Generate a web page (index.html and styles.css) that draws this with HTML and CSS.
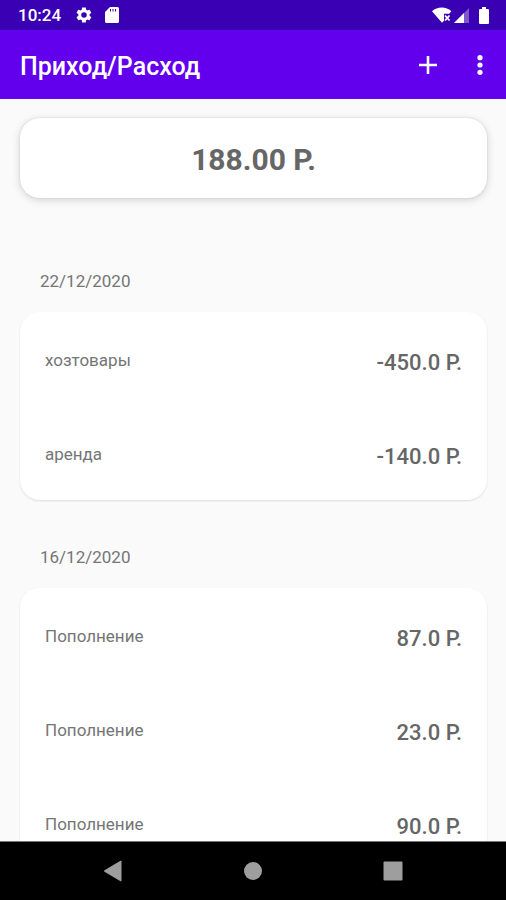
FILE: index.html
```html
<!DOCTYPE html>
<html lang="ru">
<head>
<meta charset="utf-8">
<meta name="viewport" content="width=device-width, initial-scale=1">
<title>Приход/Расход</title>
<link rel="stylesheet" href="styles.css">
</head>
<body>
<div class="status">
  <div class="status-left">
    <span class="clock">10:24</span>
    <svg class="gear" width="18" height="18" viewBox="0 0 24 24"><path d="M19.4 13c0-.3.1-.6.1-1s0-.7-.1-1l2.1-1.6c.2-.2.3-.4.1-.7l-2-3.400c-.1-.3-.4-.3-.6-.3l-2.500 1c-.5-.4-1.100-.7-1.700-1l-.4-2.600c0-.2-.2-.4-.5-.4h-4c-.2 0-.4.2-.5.4L9 5c-.6.300-1.200.6-1.700 1l-2.500-1c-.2 0-.5 0-.6.3l-2 3.400c-.1.200-.1.500.1.7L4.500 11c0 .3-.1.700-.1 1s0 .7.1 1l-2.200 1.600c-.2.200-.2.400-.1.700l2 3.400c.1.300.4.300.6.300l2.500-1c.5.400 1.100.7 1.700 1l.4 2.600c.1.200.3.400.5.400h4c.3 0 .5-.2.500-.4l.4-2.600c.6-.3 1.200-.6 1.700-1l2.500 1c.2.100.5 0 .6-.3l2-3.400c.1-.2.100-.5-.1-.7L19.400 13ZM12 15.700a3.700 3.700 0 1 1 0-7.400 3.700 3.700 0 0 1 0 7.400Z" fill="#fff"/></svg>
    <svg width="14" height="16" viewBox="0 0 14 16"><path fill="#fff" fill-rule="evenodd" d="M5 0h7.500Q14 0 14 1.500v13Q14 16 12.500 16h-11Q0 16 0 14.500V5ZM5 2v2.500h1V2Zm2.500 0v2.500h1V2ZM10 2v2.500h1V2Z"/></svg>
  </div>
  <div class="status-right">
    <svg width="20" height="16" viewBox="0 0 20 16"><path fill="#fff" d="M0 4.200C5.500-.8 14-.8 19.400 4.200L17.200 6.800H12v7L10 15.800Z"/><path fill="none" stroke="#fff" stroke-width="1.800" d="m13 8.500 4.500 5m0-5-4.500 5"/></svg>
    <svg width="15" height="15" viewBox="0 0 15 15"><path fill="#fff" fill-opacity=".35" d="M15 0v15H0Z"/><path fill="#fff" d="M10 5v10H0Z"/></svg>
    <svg class="battery" width="10" height="17" viewBox="0 0 10 17"><path fill="#fff" d="M3 0h4v2h2q1 0 1 1v13q0 1-1 1H1q-1 0-1-1V3q0-1 1-1h2Z"/></svg>
  </div>
</div>
<header class="appbar">
  <h1>Приход/Расход</h1>
  <div class="actions">
    <button type="button" aria-label="Добавить"><svg width="18" height="18" viewBox="0 0 18 18"><path d="M9 0v18M0 9h18" stroke="#fff" stroke-width="2.600"/></svg></button>
    <button type="button" aria-label="Меню"><svg width="6" height="20" viewBox="0 0 6 20"><g fill="#fff"><circle cx="3" cy="2.700" r="2.600"/><circle cx="3" cy="10" r="2.600"/><circle cx="3" cy="17.300" r="2.600"/></g></svg></button>
  </div>
</header>
<main>
  <div class="balance">188.00 Р.</div>
  <section>
    <h2>22/12/2020</h2>
    <ul class="card">
      <li><span class="name">хозтовары</span><span class="sum">-450.0 Р.</span></li>
      <li><span class="name">аренда</span><span class="sum">-140.0 Р.</span></li>
    </ul>
  </section>
  <section>
    <h2>16/12/2020</h2>
    <ul class="card">
      <li><span class="name">Пополнение</span><span class="sum">87.0 Р.</span></li>
      <li><span class="name">Пополнение</span><span class="sum">23.0 Р.</span></li>
      <li><span class="name">Пополнение</span><span class="sum">90.0 Р.</span></li>
    </ul>
  </section>
</main>
<nav>
  <button type="button" aria-label="Назад"><svg width="20" height="22" viewBox="0 0 20 22"><path fill="#9e9e9e" d="M1.500 10.200 17.500.8q1-.5 1 .5v19.400q0 1-1 .5L1.500 11.800q-1.200-.8 0-1.600Z"/></svg></button>
  <button type="button" aria-label="Домой"><svg width="20" height="20" viewBox="0 0 20 20"><circle cx="10" cy="10" r="9" fill="#9e9e9e"/></svg></button>
  <button type="button" aria-label="Недавние"><svg width="20" height="20" viewBox="0 0 20 20"><rect x=".5" y=".5" width="19" height="19" rx="1" fill="#9e9e9e"/></svg></button>
</nav>
</body>
</html>
```
FILE: styles.css
```css
* { box-sizing: border-box; }
body {
  margin: 0;
  height: 100vh;
  display: flex;
  flex-direction: column;
  background: #fafafa;
  color: #666;
  font-family: Roboto, "Liberation Sans", sans-serif;
}
svg { display: block; }
button {
  display: flex;
  align-items: center;
  justify-content: center;
  padding: 0;
  border: 0;
  background: none;
}
.status {
  flex: none;
  height: 30px;
  display: flex;
  justify-content: space-between;
  background: #3a00b3;
  color: #fff;
  padding: 0 17px 0 18px;
}
.status-left, .status-right { display: flex; align-items: center; }
.clock { font-size: 17px; font-weight: 500; line-height: 32px; }
.gear { margin: 0 12px 0 14px; }
.status-right { gap: 2px; }
.battery { margin-left: 8px; }
.appbar {
  flex: none;
  height: 69px;
  display: flex;
  align-items: center;
  justify-content: space-between;
  background: #6200ee;
  color: #fff;
  padding: 0 8px 0 20px;
}
h1 { margin: 0; padding-top: 4px; font-size: 25px; font-weight: 500; line-height: 32px; }
.actions { display: flex; gap: 10px; }
.actions button { width: 48px; height: 48px; }
.actions button + button { width: 36px; }
main { flex: 1; min-height: 0; overflow: hidden; padding: 19px 19px 0 20px; }
.balance {
  height: 80px;
  margin-bottom: 52px;
  border-radius: 20px;
  background: #fff;
  box-shadow: 0 2px 8px rgba(0, 0, 0, .16), 0 0 2px rgba(0, 0, 0, .12);
  font-size: 30px;
  font-weight: 700;
  line-height: 84px;
  text-align: center;
}
h2 {
  margin: 0;
  padding: 19px 20px;
  font-size: 17px;
  font-weight: 400;
  line-height: 24px;
  color: #757575;
}
.card {
  list-style: none;
  margin: 0 0 26px;
  padding: 0;
  border-radius: 20px;
  background: #fff;
  box-shadow: 0 1px 2px rgba(0, 0, 0, .12);
}
.card li {
  height: 94px;
  display: flex;
  align-items: center;
  justify-content: space-between;
  padding: 4px 25px 0;
}
.name { font-size: 17px; line-height: 24px; color: #757575; padding-bottom: 2px; }
.sum { font-size: 22px; font-weight: 500; line-height: 28px; padding-top: 4px; }
nav {
  flex: none;
  height: 59px;
  display: flex;
  align-items: center;
  justify-content: center;
  gap: 92px;
  background: #000;
  border-top: 1px solid #777;
}
nav button { width: 48px; height: 48px; }
```
